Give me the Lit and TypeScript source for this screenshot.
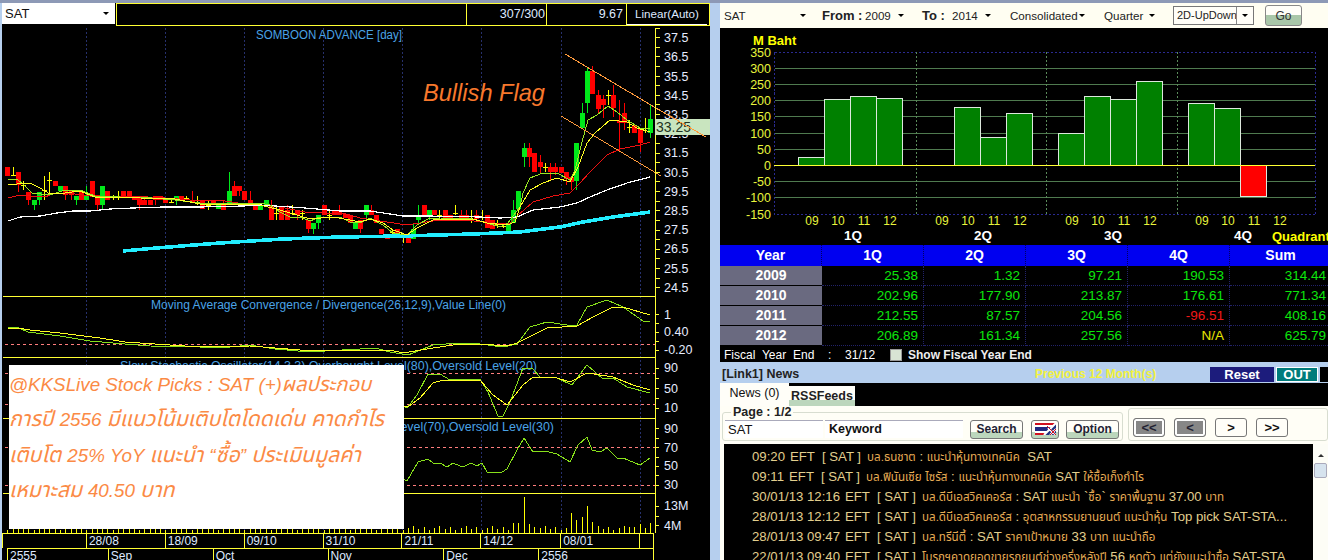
import { LitElement, html, css, svg } from "lit";
import { customElement } from "lit/decorators.js";

type Pt = [number, number];
type C = [string, number, number, number, number];

const poly = (p: Pt[]) => p.map((q) => q.join(",")).join(" ");

// candle rows: type, wick top, body top, body bottom, wick bottom (in 3x crop units)
const c1: C[] = [
  ["r",22,22,47,47],["y",20,45,47,47],["r",37,37,75,95],["y",63,75,75,90],["r",95,95,120,135],
  ["g",120,120,135,150],["g",95,95,120,135],["y",47,90,90,120],["y",37,60,60,100],["r",63,63,78,78],
  ["g",78,78,93,93],["r",78,78,105,120],["r",93,93,105,120],["g",108,108,120,135],["r",93,93,120,120],
  ["g",78,108,120,120],["r",63,63,108,108],["r",105,105,135,150],["g",78,78,135,150],["r",93,93,120,120],
  ["y",105,110,110,120],["y",93,108,108,120],["r",93,93,108,108],["r",93,93,108,108],["r",108,108,120,120],
  ["r",108,108,135,150],["r",108,120,135,135],["r",120,120,135,135],["r",108,108,120,135],["r",108,108,120,120],
  ["r",120,120,130,130],["y",120,125,125,130],["g",108,108,120,135],["r",108,108,120,120],["y",108,114,114,120],
  ["r",93,120,130,130],["y",108,125,125,135],["r",120,120,148,148],["y",120,135,135,150],["r",120,120,135,135],
  ["g",135,135,148,148],["r",120,135,150,150],["g",37,93,130,130],["r",63,78,108,108],["r",78,78,93,108],
  ["r",93,93,120,120],["r",93,120,135,135],["r",135,135,150,150],["g",135,135,150,150],["g",120,120,135,135],
];
const c2: C[] = [
  ["r",60,78,120,120],["y",78,100,100,120],["r",78,78,120,120],["r",75,90,120,120],["y",75,100,100,105],
  ["r",90,90,105,120],["y",90,100,100,120],["r",120,120,148,160],["g",130,130,148,162],["g",105,105,130,148],
  ["r",75,75,105,105],["y",90,105,105,120],["r",93,93,105,105],["r",75,93,105,105],["r",102,102,115,115],
  ["r",105,105,130,130],["g",130,130,148,148],["r",120,120,148,160],["g",75,75,105,120],["r",75,90,105,105],
  ["r",105,105,130,130],["r",148,148,163,163],["r",163,163,177,177],["y",150,157,157,162],["r",148,148,160,160],
  ["y",162,172,172,190],["r",175,175,190,190],["g",132,148,178,178],["g",75,105,120,130],["r",75,75,105,105],
  ["g",90,90,105,120],["r",90,90,105,105],["y",90,105,105,118],["r",90,90,118,118],["r",105,105,118,118],
  ["y",75,100,100,105],["r",90,105,118,118],["r",90,105,118,118],["y",90,118,118,130],["r",90,105,118,118],
  ["y",90,110,110,120],["r",105,105,145,145],["r",120,120,148,148],["y",120,132,132,145],["y",130,138,138,145],["g",130,130,155,155],
];
const c3: C[] = [
  ["g",420,450,490,490],["g",392,392,448,448],["g",250,265,290,320],["r",250,265,290,320],["r",280,280,335,335],
  ["r",285,307,322,340],["y",310,322,322,335],["r",310,322,335,362],["r",310,322,335,345],["r",322,322,340,340],
  ["r",337,337,357,375],["r",350,350,365,390],["g",250,250,362,390],["g",130,160,205,205],["g",20,33,130,160],
  ["r",17,33,103,103],["r",90,105,148,160],["r",105,118,135,175],["y",90,105,105,135],["r",75,105,145,170],
  ["r",120,182,190,275],["r",130,160,190,210],["y",180,200,200,218],["r",195,195,218,218],["r",205,205,250,275],
  ["y",175,205,205,218],["g",135,178,218,235],
];
const scaleC = (rows: C[], base: number): C[] =>
  rows.map(([t, a, b, c, d]) => [t, base + a / 3, base + b / 3, base + c / 3, base + d / 3]);
const candles: C[] = [...scaleC(c1, 160), ...scaleC(c2, 180), ...scaleC(c3, 60)];

const redLine: Pt[] = [[8,198],[20,195],[30,196],[45,197],[55,193],[65,193],[75,194],[90,196],[130,196],[165,198],[190,200],[225,201],[245,204],[260,203],[280,207],[305,212],[327,213],[343,213],[360,218],[387,222],[407,225],[420,223],[433,221],[460,220],[487,222],[503,224],[510,223],[517,216],[533,202],[553,196],[570,193],[580,183],[590,172],[607,155],[620,149],[640,145],[650,142]];
const whiteLine: Pt[] = [[8,221],[20,217],[40,216],[57,213],[73,211],[90,211],[110,209],[133,208],[163,207],[200,207],[243,206],[260,205],[305,208],[340,211],[370,211],[390,214],[403,216],[427,216],[480,217],[500,218],[517,217],[533,210],[560,207],[577,203],[590,197],[607,190],[627,183],[650,177]];
const cyanLine: Pt[] = [[123,251],[156,248],[220,243],[283,239],[340,237],[403,236],[473,234],[520,232],[560,227],[583,222],[613,217],[650,212]];
const greenLine: Pt[] = [[8,179],[17,179],[25,186],[32,193],[50,195],[65,190],[80,190],[95,196],[120,197],[140,197],[175,200],[200,203],[225,203],[245,204],[260,203],[270,205],[280,212],[290,217],[303,218],[310,221],[320,217],[340,217],[350,222],[360,223],[370,218],[383,225],[393,233],[407,235],[417,225],[430,218],[440,218],[473,219],[487,223],[500,227],[508,223],[520,207],[523,193],[530,178],[543,173],[557,173],[570,180],[575,170],[582,142],[588,120],[597,115],[608,106],[617,112],[627,120],[640,128],[650,128]];
const yellowLine: Pt[] = [[8,185],[17,184],[30,183],[40,188],[50,194],[65,193],[80,191],[95,197],[120,197],[140,198],[175,199],[200,204],[225,204],[245,204],[260,205],[280,210],[310,219],[333,217],[350,220],[360,222],[370,219],[383,223],[393,230],[407,235],[417,228],[433,220],[473,219],[487,223],[507,225],[515,222],[520,207],[530,190],[543,183],[557,178],[570,182],[578,167],[587,143],[595,133],[610,120],[627,122],[637,128],[650,132]];

const macdG: Pt[] = [[8,327],[17,327],[28,332],[60,336],[90,341],[125,344],[150,346],[200,347],[220,348],[250,345],[275,349],[310,352],[325,351],[360,349],[375,348],[390,352],[408,355],[433,345],[460,343],[480,344],[503,347],[517,344],[530,327],[547,322],[567,325],[577,325],[587,307],[607,300],[623,307],[643,321],[650,321]];
const macdY: Pt[] = [[8,328],[17,328],[30,330],[60,333],[100,338],[125,342],[200,347],[250,346],[300,350],[390,350],[403,353],[433,348],[460,344],[480,344],[507,346],[517,343],[547,328],[577,326],[593,317],[613,307],[623,307],[650,315]];
const stochG: Pt[] = [[400,405],[407,408],[417,395],[428,374],[440,374],[450,380],[480,379],[488,392],[498,416],[503,416],[510,402],[523,368],[533,369],[540,377],[557,378],[572,385],[587,365],[603,379],[613,378],[627,387],[650,393]];
const stochY: Pt[] = [[400,405],[408,407],[420,398],[433,383],[443,380],[480,380],[493,395],[507,405],[523,385],[533,377],[557,378],[570,382],[587,373],[613,377],[633,385],[650,390]];
const rsi: Pt[] = [[400,478],[407,481],[418,462],[428,459],[433,463],[440,463],[447,467],[453,463],[460,466],[465,466],[471,463],[477,466],[482,463],[487,472],[502,472],[507,469],[517,450],[524,438],[533,452],[545,451],[557,454],[570,462],[578,445],[587,437],[592,450],[600,452],[607,448],[617,458],[623,458],[640,465],[650,458]];

const volumePeaks: Record<number, number> = { 96: 523, 97: 523, 98: 497, 99: 524, 100: 527, 107: 513, 108: 520, 109: 517, 110: 506, 111: 522, 112: 526, 118: 527, 120: 524, 122: 523 };

const priceLabels: [string, number][] = [["37.5",37],["36.5",56],["35.5",76],["34.5",95],["33.5",114],["32.5",133],["31.5",152],["30.5",172],["29.5",191],["28.5",210],["27.5",229],["26.5",248],["25.5",268],["24.5",287]];
const otherLabels: [string, number][] = [["1",314],["0.40",331],["-0.20",349],["90",367],["50",388],["10",407],["90",428],["70",447],["50",465],["30",484],["13M",505],["4M",525]];
const grid = [86, 165, 244, 323, 402, 481, 561, 640];

const axis1 = [2, 86, 165, 244, 323, 402, 481, 561, 640, 654];
const axis1L = ["", "28/08", "18/09", "09/10", "31/10", "21/11", "14/12", "08/01", ""];
const axis2 = [7, 108, 213, 328, 444, 539, 654];
const axis2L = ["2555", "Sep", "Oct", "Nov", "Dec", "2556"];

const yTicks = [350, 300, 250, 200, 150, 100, 50, 0, -50, -100, -150];
const yOf = (v: number) => 165.4 - v * 0.324;
const barX = [798.4, 928, 1058.6, 1188.6];
const quarters = [
  [25.38, 202.96, 212.55, 206.89],
  [1.32, 177.9, 87.57, 161.34],
  [97.21, 213.87, 204.56, 257.56],
  [190.53, 176.61, -96.51, 0],
];

const rows: [string, string, string, string, string, string][] = [
  ["2009", "25.38", "1.32", "97.21", "190.53", "314.44"],
  ["2010", "202.96", "177.90", "213.87", "176.61", "771.34"],
  ["2011", "212.55", "87.57", "204.56", "-96.51", "408.16"],
  ["2012", "206.89", "161.34", "257.56", "N/A", "625.79"],
];

const news: [string, string][] = [
  ["09:20", "บล.ธนชาต : แนะนำหุ้นทางเทคนิค  SAT"],
  ["09:11", "บล.ฟินันเซีย ไซรัส : แนะนำหุ้นทางเทคนิค SAT ให้ซื้อเก็งกำไร"],
  ["30/01/13 12:16", "บล.ดีบีเอสวิคเคอร์ส : SAT แนะนำ `ซื้อ` ราคาพื้นฐาน 37.00 บาท"],
  ["28/01/13 12:12", "บล.ดีบีเอสวิคเคอร์ส : อุตสาหกรรมยานยนต์ แนะนำหุ้น Top pick SAT-STA..."],
  ["28/01/13 09:47", "บล.ทรีนีตี้ : SAT ราคาเป้าหมาย 33 บาท แนะนำถือ"],
  ["22/01/13 09:40", "โบรกฯคาดยอดขายรถยนต์ช่วงครึ่งหลังปี 56 หดตัว แต่ยังแนะนำซื้อ SAT-STA"],
];

const thaiParts = (s: string) => s.split(/([\u0E00-\u0E7F.]*[\u0E00-\u0E7F][\u0E00-\u0E7F.]*)/);

@customElement("app-root")
export class AppRoot extends LitElement {
  static styles = css`
    :host { display: block; width: 1328px; height: 560px; overflow: hidden; font-family: "Liberation Sans", Arial, sans-serif; }
    .app { display: flex; width: 1328px; height: 560px; box-sizing: border-box; background: #b6cfee; border-top: 3px solid #8d99b6; padding-left: 2px; overflow: hidden; }
    .left { position: relative; width: 708px; flex: none; display: flex; flex-direction: column; background: #000; height: 557px; overflow: hidden; }
    .topbar { display: flex; height: 23px; flex: none; background: #000; }
    .combo { width: 113px; height: 21px; background: #fff; display: flex; align-items: center; justify-content: space-between; padding: 0 6px 0 3px; box-sizing: border-box; font-size: 13px; color: #111; margin-right: 1px; }
    .tri { width: 0; height: 0; border-left: 3px solid transparent; border-right: 3px solid transparent; border-top: 3px solid #000; }
    .cells { flex: 1; display: flex; border: 1px solid #ffff33; box-sizing: border-box; height: 23px; }
    .cells div { border-left: 1px solid #ffff33; box-sizing: border-box; color: #dfe9ff; font-size: 12.5px; text-align: right; line-height: 21px; padding-right: 1px; }
    .cells .blank { border-left: 0; width: 349px; }
    .cells .num { width: 80px; }
    .cells .num.r { padding-right: 3px; }
    .cells .mode { width: 81px; text-align: center; border-bottom: 1px solid #fff; padding-right: 0; line-height: 20px; font-size: 11.6px; }
    .chart { display: block; width: 708px; height: 507px; flex: none; background: #000; shape-rendering: crispEdges; }
    .chart text { font-family: "Liberation Sans", Arial, sans-serif; }
    .title { font-size: 12px; fill: #4aa3e6; }
    .ax { font-size: 12.5px; fill: #e6ecff; }
    .tag { font-size: 14px; fill: #223322; }
    .flag { font-size: 23.6px; font-style: italic; fill: #f8782c; }
    .xrow { display: flex; width: 652px; flex: none; border-top: 1px solid #ffff33; border-right: 1px solid #ffff33; box-sizing: border-box; }
    .xrow1 { height: 15px; }
    .xrow2 { height: 14px; margin-left: 5px; width: 647px; }
    .xcell { box-sizing: border-box; border-left: 1px solid #ffff33; color: #dfe9ff; font-size: 12px; line-height: 14px; padding-left: 2px; white-space: nowrap; }
    .note { position: absolute; left: 7px; top: 362px; width: 395px; height: 164px; background: #fff; color: #fb8a45; font-size: 18.8px; font-style: italic; line-height: 35.4px; padding-top: 2px; box-sizing: border-box; white-space: nowrap; font-family: "Liberation Sans", "Noto Sans Thai", "Noto Sans", sans-serif; }
    .note span { font-size: 21.3px; line-height: 1; }
    .note span.first { font-size: 20.2px; }
    .right { margin-left: 10px; width: 608px; flex: none; height: 557px; display: flex; flex-direction: column; overflow: hidden; font-size: 12px; }
    .tools { height: 25px; flex: none; background: #fffef2; display: flex; align-items: center; font-size: 11.6px; color: #222; box-sizing: border-box; padding-left: 4px; }
    .drop { display: flex; align-items: center; justify-content: space-between; box-sizing: border-box; }
    .drop span { white-space: nowrap; }
    .lab { font-weight: 700; font-size: 13px; white-space: nowrap; }
    .combo2 { display: flex; width: 81px; height: 19px; border: 1px solid #777; background: #fffef8; box-sizing: border-box; margin-left: 18px; align-items: center; font-size: 11px; }
    .combo2 span { flex: 1; padding-left: 3px; border-right: 1px solid #888; line-height: 17px; white-space: nowrap; overflow: hidden; }
    .combo2 i { width: 16px; display: flex; justify-content: center; }
    .go { margin-left: 11px; width: 37px; height: 21px; border: 1px solid #888; border-radius: 3px; box-sizing: border-box; background: linear-gradient(#fffef8 0 45%, #a9c7a9 45% 100%); text-align: center; line-height: 20px; font-size: 12px; color: #333; }
    .qchart { display: block; width: 608px; height: 217px; flex: none; background: #000; shape-rendering: crispEdges; }
    .qchart text { font-family: "Liberation Sans", Arial, sans-serif; }
    .yl { font-size: 12.5px; fill: #e8f53c; }
    .ql { font-size: 12px; fill: #e8f53c; }
    .qq { font-size: 13.5px; font-weight: 700; fill: #fff; }
    .mb { font-size: 13px; font-weight: 700; fill: #ffff00; }
    .table { display: grid; grid-template-columns: repeat(6, 102px); flex: none; width: 612px; background: #000; height: 101px; grid-template-rows: 21px repeat(4, 20px); }
    .th { background: #0000f0; color: #fff; font-weight: 700; font-size: 14px; text-align: center; line-height: 20px; border-right: 1px dotted #000060; box-sizing: border-box; }
    .yr { background: #6a6a80; color: #fff; font-weight: 700; font-size: 14px; text-align: center; line-height: 19px; border-bottom: 1px solid #000; box-sizing: border-box; }
    .td { color: #0ce60c; font-size: 13.5px; text-align: right; padding-right: 5px; line-height: 19px; border-right: 1px dotted #22226a; border-bottom: 1px dotted #22226a; box-sizing: border-box; }
    .td.neg { color: #f01818; }
    .td.na { color: #e8e800; }
    .fiscal { height: 16px; flex: none; background: #000; color: #fff; display: flex; align-items: center; font-size: 12px; padding: 2px 0 0 4px; box-sizing: border-box; white-space: pre; }
    .fiscal .fy { width: 166px; word-spacing: 3.5px; }
    .check { width: 12px; height: 12px; background: #d8e4d4; border: 1px solid #999; box-sizing: border-box; margin-right: 6px; }
    .fiscal b { font-weight: 700; font-size: 12px; color: #eee; }
    .nhead { height: 21px; flex: none; display: flex; align-items: center; background: #b6cfee; padding: 3px 0 0 2px; box-sizing: border-box; font-weight: 700; font-size: 12.5px; color: #222; }
    .nhead .t { width: 313px; }
    .prev { width: 175px; color: #f2f23c; font-size: 12px; }
    .hbtn { height: 15px; line-height: 15px; color: #fff; text-align: center; font-size: 13px; box-sizing: border-box; }
    .reset { width: 64px; background: #1c1c7c; margin-right: 2px; }
    .out { width: 42px; background: #007c7c; margin-right: 2px; border: 1px solid #fff; line-height: 13px; }
    .xb { width: 8px; background: #000; }
    .tabs { height: 23px; flex: none; background: #000; display: flex; align-items: flex-end; font-size: 12.5px; color: #111; }
    .tab { box-sizing: border-box; text-align: center; white-space: nowrap; }
    .tab.on { width: 69px; height: 23px; background: #fffef8; line-height: 21px; }
    .tab.off { width: 66px; height: 20px; background: linear-gradient(#fffef8 0 70%, #bcd6bc 70% 100%); line-height: 20px; font-size: 12.5px; font-weight: 700; color: #222; }
    .bar { height: 38px; flex: none; background: #fffef6; display: flex; box-sizing: border-box; padding: 2px 0 3px 2px; gap: 5px; }
    .page { margin: 0; padding: 3px 3px 2px 2px; border: 1px solid #d8ddd0; border-radius: 3px; display: flex; align-items: center; width: 401px; box-sizing: border-box; min-width: 0; }
    .page legend { font-size: 12.5px; font-weight: 700; color: #222; padding: 0 2px; margin-left: 6px; line-height: 9px; height: 9px; }
    .inp { height: 18px; border-top: 1px solid #aab; background: #fff; font-size: 12.5px; font-weight: 700; color: #111; line-height: 17px; padding-left: 3px; box-sizing: border-box; margin-right: 2px; }
    .inp.a { width: 98px; font-size: 13px; font-weight: 400; }
    .inp.b { width: 138px; padding-left: 4px; margin-right: 7px; }
    .btn { height: 19px; border: 1px solid #777; border-radius: 3px; box-sizing: border-box; background: linear-gradient(#fffef8 0 65%, #bcd6bc 65% 100%); text-align: center; line-height: 16px; font-size: 12px; font-weight: 700; color: #223; margin-right: 8px; display: flex; align-items: center; justify-content: center; }
    .s { width: 53px; }
    .fl { width: 28px; margin-right: 7px; }
    .o { width: 53px; margin-right: 0; }
    .nav { flex: 1; border: 1px solid #d8ddd0; border-radius: 3px; display: flex; align-items: center; gap: 9px; padding: 5px 0 0 4px; box-sizing: border-box; }
    .n { width: 32px; height: 19px; border: 1px solid #777; border-radius: 3px; box-sizing: border-box; background: #fffef8; font-size: 13px; line-height: 17px; text-align: center; color: #111; font-weight: 700; }
    .n.d { background: #878787; color: #223; box-shadow: inset 0 0 0 2px #fff; }
    .list { flex: 1; display: flex; padding-left: 4px; background: #fffef6; min-height: 0; }
    .items { width: 589px; background: #000; padding-top: 3px; box-sizing: border-box; overflow: hidden; }
    .row { height: 20px; line-height: 20px; font-size: 13.2px; color: #e2cf8e; white-space: pre; padding-left: 28px; display: flex; font-family: "Liberation Sans", "Noto Sans Thai", "Noto Sans", sans-serif; overflow: hidden; }
    .row .time { margin-right: 5px; }
    .row .eft { margin-right: 7px; }
    .row .sym { margin-right: 6px; }
    .row .th-part { color: #e6ac55; font-size: 11.6px; }
    .scroll { flex: 1; background: #fdfdf6; display: flex; flex-direction: column; align-items: center; padding-top: 10px; box-sizing: border-box; }
    .up { width: 0; height: 0; border-left: 3px solid transparent; border-right: 3px solid transparent; border-bottom: 3px solid #333; }
    .thumb { width: 13px; height: 15px; margin-top: 6px; background: #d6e3ee; border: 1px solid #aab; border-radius: 2px; box-sizing: border-box; }
  `;

  private mainChart() {
    const vlines = grid.map((x) => svg`<line x1=${x + 0.5} x2=${x + 0.5} y1="28" y2="533" stroke="#26306c" stroke-dasharray="2 2"/>`);
    const cs = candles.map(([t, a, b, c, d], i) => {
      const x = Math.round(7.3 + 5.27 * i);
      const col = t === "r" ? "#ff0000" : t === "g" ? "#00e81a" : "#ffff00";
      if (t === "y")
        return svg`<rect x=${x} y=${a} width="1" height=${Math.max(1, d - a)} fill=${col}/><rect x=${x - 2} y=${b} width="5" height="1" fill=${col}/>`;
      return svg`<rect x=${x} y=${a} width="1" height=${Math.max(0, d - a)} fill=${col}/><rect x=${x - 2} y=${b} width="5" height=${Math.max(1, c - b)} fill=${col}/>`;
    });
    const vols = candles.map((_, i) => {
      const x = Math.round(7.3 + 5.27 * i);
      const top = volumePeaks[i] ?? 533 - (3 + ((i * 7) % 5));
      return svg`<rect x=${x} y=${top} width="1" height=${533 - top} fill="#ffff00"/>`;
    });
    const ticks: unknown[] = [];
    for (let y = 27.5; y < 296; y += 9.62) ticks.push(svg`<rect x="655" y=${Math.round(y)} width="5" height="1" fill="#ffff33"/>`);
    for (const y of [314, 323, 332, 341, 350, 368, 378, 388, 398, 408, 428, 438, 447, 457, 466, 475, 485, 506, 516, 525])
      ticks.push(svg`<rect x="655" y=${y} width="4" height="1" fill="#ffff33"/>`);
    const hline = (y: number) => svg`<rect x="3" y=${y} width="652" height="1" fill="#ffff33"/>`;
    const dash = (y: number) => svg`<line x1="5" x2="655" y1=${y + 0.5} y2=${y + 0.5} stroke="#ff7d7d" stroke-dasharray="3 3"/>`;
    const line = (pts: Pt[], col: string, w = 1) => svg`<polyline points=${poly(pts)} fill="none" stroke=${col} stroke-width=${w}/>`;
    return svg`<svg class="chart" viewBox="2 26 708 507">
      ${vlines}
      <text class="title" x="256" y="39" textLength="146" lengthAdjust="spacingAndGlyphs">SOMBOON ADVANCE [day]</text>
      <text class="flag" x="423" y="101">Bullish Flag</text>
      ${cs}
      ${line(redLine, "#ee1111")}
      ${line(whiteLine, "#ffffff", 1.2)}
      ${line(cyanLine, "#22eeff", 3.6)}
      ${line(greenLine, "#99e622")}
      ${line(yellowLine, "#ffff22")}
      <line x1="565" y1="54" x2="661" y2="111" stroke="#ff9a3c"/>
      <line x1="561" y1="116" x2="661" y2="176" stroke="#ff9a3c"/>
      ${hline(296)}${hline(357)}${hline(418)}${hline(493)}
      <rect x="655" y="28" width="1" height="505" fill="#ffff33"/>
      ${ticks}
      ${priceLabels.map(([t, y]) => svg`<text class="ax" x="664" y=${y + 5}>${t}</text>`)}
      ${otherLabels.map(([t, y]) => svg`<text class="ax" x="664" y=${y + 5}>${t}</text>`)}
      <rect x="655" y="119" width="55" height="16" fill="#c9e5bf"/>
      <text class="tag" x="656" y="132">33.25</text>
      <line x1="656" y1="108" x2="706" y2="137" stroke="#ff9a3c"/>
      <text class="title" x="151" y="309" textLength="355" lengthAdjust="spacingAndGlyphs">Moving Average Convergence / Divergence(26,12,9),Value Line(0)</text>
      <text class="title" x="120" y="370" textLength="417" lengthAdjust="spacingAndGlyphs">Slow Stochastic Oscillator(14,3,3),Overbought Level(80),Oversold Level(20)</text>
      <text class="title" x="170" y="431" textLength="384" lengthAdjust="spacingAndGlyphs">Relative Strength Index(14),Overbought Level(70),Oversold Level(30)</text>
      ${dash(344)}${dash(373)}${dash(404)}${dash(447)}${dash(485)}
      ${line(macdG, "#88e01a")}
      ${line(macdY, "#ffff22")}
      ${line(stochG, "#88e01a")}
      ${line(stochY, "#ffff22")}
      ${line(rsi, "#88e01a")}
      ${vols}
    </svg>`;
  }

  private quarterChart() {
    const gridY = yTicks.filter((v) => v !== 350 && v !== -150);
    const bars: unknown[] = [];
    quarters.forEach((q, qi) =>
      q.forEach((v, j) => {
        if (Math.abs(v) < 5) return;
        const x = barX[qi] + j * 26.1;
        const y = v > 0 ? yOf(v) : yOf(0);
        const h = Math.abs(v) * 0.324;
        bars.push(svg`<rect x=${x} y=${y} width="26" height=${h} fill=${v > 0 ? "#008000" : "#ff0000"} stroke="#dde8dd"/>`);
      })
    );
    const labs = ["09", "10", "11", "12"];
    const labX = [812, 942, 1072, 1202];
    return svg`<svg class="qchart" viewBox="720 28 608 217">
      <text class="mb" x="753" y="45">M Baht</text>
      <rect x="774.5" y="52.5" width="541" height="162" fill="none" stroke="#2a2a90" stroke-dasharray="2 2"/>
      ${gridY.map((v) => svg`<rect x="775" y=${Math.floor(yOf(v))} width="540" height="1" fill="#4f7a4f"/>`)}
      ${[916.5, 1046.5, 1177.5].map((x) => svg`<line x1=${x} x2=${x} y1="52" y2="214" stroke="#5a8a5a" stroke-dasharray="2 2"/>`)}
      ${bars}
      <line x1="774" x2="1315" y1="165.5" y2="165.5" stroke="#ffff33"/>
      ${yTicks.map((v) => svg`<text class="yl" text-anchor="end" x="771" y=${yOf(v) + 4.5}>${v}</text>`)}
      ${labX.map((x) => labs.map((l, j) => svg`<text class="ql" text-anchor="middle" x=${x + j * 26} y="225">${l}</text>`))}
      ${["1Q", "2Q", "3Q", "4Q"].map((l, i) => svg`<text class="qq" text-anchor="middle" x=${853 + i * 130} y="240">${l}</text>`)}
      <text class="mb" x="1272" y="241">Quadrant</text>
    </svg>`;
  }

  private flag() {
    return svg`<svg width="21" height="12" viewBox="0 0 21 12">
      <rect width="21" height="12" fill="#fff"/>
      <rect width="21" height="2" fill="#d01020"/><rect y="4" width="21" height="4" fill="#202880"/><rect y="10" width="21" height="2" fill="#d01020"/>
      <polygon points="21,0 21,12 9,12" fill="#1f2f80"/>
      <path d="M9 12L21 0M13 5L21 12M15 12L21 6" stroke="#fff" stroke-width="2"/>
      <path d="M15 12L21 6M12 3L21 12" stroke="#d01020" stroke-width="1"/>
    </svg>`;
  }

  render() {
    const tri = html`<div class="tri"></div>`;
    return html`<div class="app">
      <div class="left">
        <div class="topbar">
          <div class="combo"><span>SAT</span>${tri}</div>
          <div class="cells">
            <div class="blank"></div>
            <div class="num">307/300</div>
            <div class="num r">9.67</div>
            <div class="mode">Linear(Auto)</div>
          </div>
        </div>
        ${this.mainChart()}
        <div class="xrow xrow1">
          ${axis1L.map((l, i) => html`<div class="xcell" style="width:${axis1[i + 1] - axis1[i]}px">${l}</div>`)}
        </div>
        <div class="xrow xrow2">
          ${axis2L.map((l, i) => html`<div class="xcell" style="width:${axis2[i + 1] - axis2[i]}px">${l}</div>`)}
        </div>
        <div class="note">@KKSLive Stock Picks : SAT (+)<span class="first">ผลประกอบ</span><br /><span>การปี </span>2556 <span>มีแนวโน้มเติบโตโดดเด่น คาดกำไร</span><br /><span>เติบโต </span>25% YoY <span>แนะนำ </span>“<span>ซื้อ</span>” <span>ประเมินมูลค่า</span><br /><span>เหมาะสม </span>40.50 <span>บาท</span></div>
      </div>
      <div class="right">
        <div class="tools">
          <div class="drop" style="width:82px"><span>SAT</span>${tri}</div>
          <span class="lab" style="margin-left:16px;width:43px">From :</span>
          <div class="drop" style="width:39px"><span>2009</span>${tri}</div>
          <span class="lab" style="margin-left:18px;width:30px">To :</span>
          <div class="drop" style="width:39px"><span>2014</span>${tri}</div>
          <div class="drop" style="width:75px;margin-left:19px"><span>Consolidated</span>${tri}</div>
          <div class="drop" style="width:51px;margin-left:19px"><span>Quarter</span>${tri}</div>
          <div class="combo2"><span>2D-UpDown</span><i>${tri}</i></div>
          <div class="go">Go</div>
        </div>
        ${this.quarterChart()}
        <div class="table">
          ${["Year", "1Q", "2Q", "3Q", "4Q", "Sum"].map((h) => html`<div class="th">${h}</div>`)}
          ${rows.map(
            (r) => html`<div class="yr">${r[0]}</div>
              ${r.slice(1).map(
                (c) => html`<div class="td ${c.startsWith("-") ? "neg" : c === "N/A" ? "na" : ""}">${c}</div>`
              )}`
          )}
        </div>
        <div class="fiscal"><span class="fy">Fiscal Year End  :  31/12</span><div class="check"></div><b>Show Fiscal Year End</b></div>
        <div class="nhead">
          <span class="t">[Link1] News</span>
          <span class="prev">Previous 12 Month(s)</span>
          <div class="hbtn reset">Reset</div>
          <div class="hbtn out">OUT</div>
          <div class="hbtn xb"></div>
        </div>
        <div class="tabs">
          <div class="tab on">News (0)</div>
          <div class="tab off">RSSFeeds</div>
        </div>
        <div class="bar">
          <fieldset class="page">
            <legend>Page : 1/2</legend>
            <div class="inp a">SAT</div>
            <div class="inp b">Keyword</div>
            <div class="btn s">Search</div>
            <div class="btn fl">${this.flag()}</div>
            <div class="btn o">Option</div>
          </fieldset>
          <div class="nav">
            <div class="n d">&lt;&lt;</div>
            <div class="n d">&lt;</div>
            <div class="n">&gt;</div>
            <div class="n">&gt;&gt;</div>
          </div>
        </div>
        <div class="list">
          <div class="items">
            ${news.map(
              ([t, s]) => html`<div class="row"><span class="time">${t}</span><span class="eft">EFT</span><span class="sym">[ SAT ]</span><span>${thaiParts(s).map((p) =>
                /[\u0E00-\u0E7F]/.test(p) ? html`<span class="th-part">${p}</span>` : p
              )}</span></div>`
            )}
          </div>
          <div class="scroll"><div class="up"></div><div class="thumb"></div></div>
        </div>
      </div>
    </div>`;
  }
}
